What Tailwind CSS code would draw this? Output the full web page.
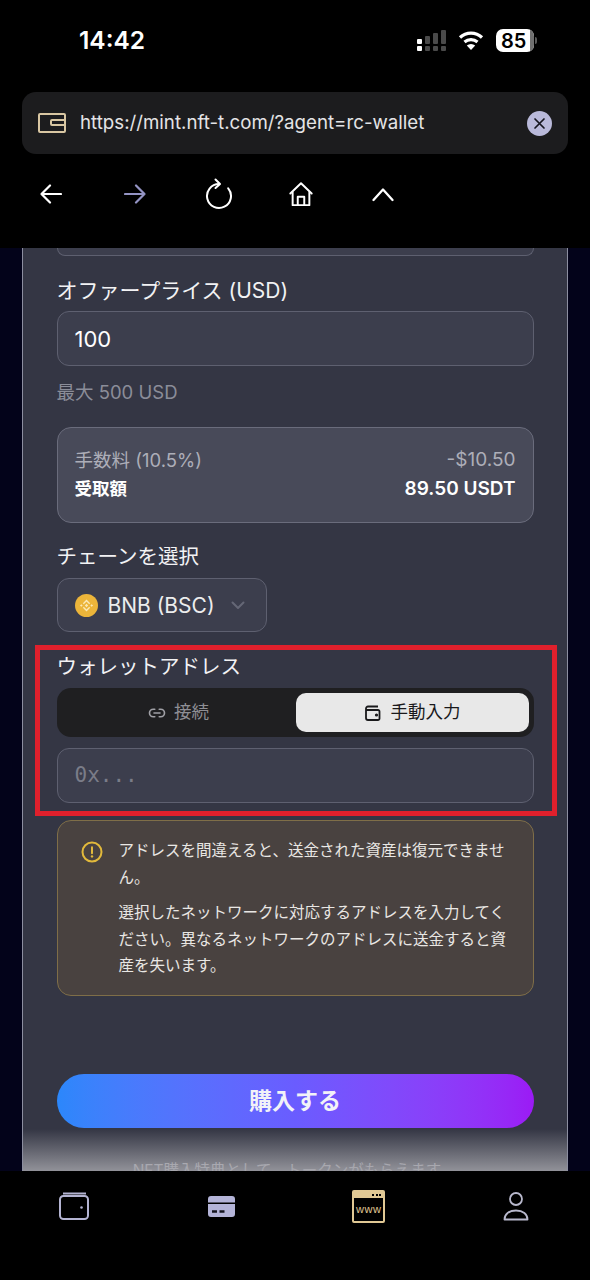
<!DOCTYPE html>
<html lang="ja">
<head>
    <meta charset="UTF-8">
    <meta name="viewport" content="width=device-width, initial-scale=1.0">
    <title>NFT Offer</title>
    <script src="https://cdn.jsdelivr.net/npm/@tailwindcss/browser@4"></script>
</head>
<body class="bg-black">
    <div class="relative w-[590px] h-[1280px] overflow-hidden flex flex-col font-['Inter','Noto_Sans_CJK_JP',sans-serif] text-white">

        <!-- status bar + browser bar -->
        <header class="h-[248px] shrink-0 bg-black">
            <div class="h-[92px] flex pt-[25px] pl-[79px] pr-[53px] justify-between">
                <span class="text-[24.5px] leading-[30px] font-semibold">14:42</span>
                <div class="flex items-start gap-[12px] pt-[4px]">
                    <svg width="30" height="24" viewBox="0 0 30 24" class="mt-[-1px]">
                        <rect x="1" y="11" width="5" height="5" rx="1" fill="#fff"/>
                        <rect x="1" y="18" width="5" height="5" rx="1" fill="#fff"/>
                        <rect x="9" y="8" width="5" height="8" rx="1" fill="#4a4a4a"/>
                        <rect x="9" y="18" width="5" height="5" rx="1" fill="#4a4a4a"/>
                        <rect x="17" y="5" width="5" height="11" rx="1" fill="#4a4a4a"/>
                        <rect x="17" y="18" width="5" height="5" rx="1" fill="#4a4a4a"/>
                        <rect x="25" y="2" width="5" height="14" rx="1" fill="#4a4a4a"/>
                        <rect x="25" y="18" width="5" height="5" rx="1" fill="#4a4a4a"/>
                    </svg>
                    <svg width="26" height="22" viewBox="0 0 26 22" fill="none" stroke="#fff" stroke-width="3.2">
                        <path d="M2 8.5a16 16 0 0 1 22 0"/>
                        <path d="M6.5 13a10 10 0 0 1 13 0"/>
                        <path d="M13 21l-4.2-4.4a6 6 0 0 1 8.4 0z" fill="#fff" stroke="none"/>
                    </svg>
                    <div class="flex items-center">
                        <div class="relative w-[38px] h-[23px] rounded-[7px] bg-white overflow-hidden flex items-center pl-[5px] text-black text-[20px] leading-none font-semibold">
                            85
                            <div class="absolute right-0 top-0 bottom-0 w-[4px] bg-[#6f6f6f]"></div>
                        </div>
                        <div class="ml-[1px] w-[2px] h-[7px] rounded-r bg-[#5a5a5a]"></div>
                    </div>
                </div>
            </div>

            <div class="mx-[22px] h-[62px] rounded-[14px] bg-[#1c1c1e] flex items-center pl-[16px] pr-[16px]">
                <svg width="28" height="22" viewBox="0 0 28 22" fill="none" stroke="#d8c6a2" stroke-width="2" class="shrink-0">
                    <rect x="1" y="2" width="26" height="18" rx="1"/>
                    <path d="M27 8H14a1 1 0 0 0-1 1v3a1 1 0 0 0 1 1h13"/>
                </svg>
                <span class="ml-[14px] pt-[1px] text-[18.7px] leading-none text-[#e4e4e6]">https://mint.nft-t.com/?agent=rc-wallet</span>
                <div class="ml-auto w-[25px] h-[25px] rounded-full bg-[#b9b9da] flex items-center justify-center">
                    <svg width="13" height="13" viewBox="0 0 13 13" stroke="#15151f" stroke-width="1.7" stroke-linecap="round"><path d="M2 2l9 9M11 2l-9 9"/></svg>
                </div>
            </div>

            <nav class="mt-[16px] pl-[9px] flex items-center h-[48px]">
                <div class="w-[84px] flex justify-center">
                    <svg width="22" height="24" viewBox="0 0 22 24" fill="none" stroke="#fff" stroke-width="2.2" stroke-linecap="round" stroke-linejoin="round"><path d="M21 12H1.500M10 3.500L1.500 12l8.500 8.500"/></svg>
                </div>
                <div class="w-[84px] flex justify-center">
                    <svg width="22" height="24" viewBox="0 0 22 24" fill="none" stroke="#9494c4" stroke-width="2.2" stroke-linecap="round" stroke-linejoin="round"><path d="M1 12h19.500M12 3.500l8.500 8.500-8.500 8.500"/></svg>
                </div>
                <div class="w-[83px] flex justify-center">
                    <svg width="28" height="32" viewBox="0 0 28 32" fill="none" stroke="#fff" stroke-width="2" stroke-linecap="round" stroke-linejoin="round"><path d="M23.200 10.300A12 12 0 1 1 14 6"/><path d="M10.500 1.500L15 6l-4.500 4"/></svg>
                </div>
                <div class="w-[82px] flex justify-center">
                    <svg width="26" height="26" viewBox="0 0 28 28" fill="none" stroke="#fff" stroke-width="2.1" stroke-linecap="round" stroke-linejoin="round"><path d="M2.500 13.500L14 2.500l11.500 11"/><path d="M5 12V26h18V12"/><path d="M10.500 26v-9h7v9"/></svg>
                </div>
                <div class="w-[82px] flex justify-center">
                    <svg width="22" height="16" viewBox="0 0 22 16" fill="none" stroke="#fff" stroke-width="2.3" stroke-linecap="round" stroke-linejoin="round"><path d="M1.500 14L11 3.500 20.500 14"/></svg>
                </div>
            </nav>
        </header>

        <!-- page content -->
        <main class="relative flex-1 min-h-0 bg-[#03031a] overflow-hidden">
            <div class="mx-[22px] h-full bg-[#343644] border-x border-[#8c8ea0] px-[33.5px] overflow-hidden">
                <div class="h-[8px] border border-t-0 border-[#5e6070] rounded-b-[12px] bg-[#3c3e4d]"></div>

                <label class="block mt-[21px] text-[21px] leading-[28px] text-[#f2f2f4]">オファープライス (USD)</label>
                <div class="mt-[6px] h-[55px] rounded-[12px] bg-[#3c3e4d] border border-[#5e6070] flex items-center px-[17px] pt-[2px] text-[22px]">100</div>
                <p class="mt-[14px] text-[18.5px] leading-[24px] text-[#8b8d99]">最大 500 USD</p>

                <div class="mt-[23px] h-[96px] rounded-[14px] bg-[#484a59] border border-[#6a6c7c] px-[17px] pt-[20px]">
                    <div class="flex justify-between text-[18.5px] leading-[24px] text-[#adaeb8]">
                        <span>手数料 (10.5%)</span><span class="text-[19px]">-$10.50</span>
                    </div>
                    <div class="flex justify-between mt-[5px] text-[19px] leading-[24px] font-semibold">
                        <span class="text-[17.5px] font-bold">受取額</span><span>89.50 USDT</span>
                    </div>
                </div>

                <label class="block mt-[20px] text-[20.5px] leading-[28px] text-[#f2f2f4]">チェーンを選択</label>
                <div class="mt-[7px] w-[210px] h-[54px] rounded-[12px] bg-[#3c3e4d] border border-[#5e6070] flex items-center pl-[17px]">
                    <svg width="23" height="23" viewBox="0 0 24 24" class="shrink-0">
                        <circle cx="12" cy="12" r="12" fill="#ecb53a"/>
                        <g fill="none" stroke="#fbe9b8" stroke-width="1.500">
                            <path d="M8.700 10.200L12 6.900l3.300 3.300M8.700 13.800L12 17.100l3.300-3.300"/>
                        </g>
                        <path fill="#fbe9b8" d="M6.600 10.600L8 12l-1.400 1.400L5.200 12zM17.400 10.600L18.800 12l-1.400 1.400L16 12zM12 10.300l1.700 1.700-1.700 1.700-1.700-1.700z"/>
                    </svg>
                    <span class="ml-[10px] text-[21px] leading-none text-[#eceded]">BNB (BSC)</span>
                    <svg width="14" height="9" viewBox="0 0 14 9" fill="none" stroke="#656776" stroke-width="2" stroke-linecap="round" stroke-linejoin="round" class="ml-[16px]"><path d="M1.500 1.500L7 7l5.500-5.500"/></svg>
                </div>

                <label class="block mt-[21px] text-[20.5px] leading-[28px] text-[#f2f2f4]">ウォレットアドレス</label>
                <div class="mt-[7px] h-[49px] rounded-[14px] bg-[#1f1f21] p-[5px] flex">
                    <div class="flex-1 flex items-center justify-center gap-[8px] text-[17.5px] text-[#8e8e94]">
                        <svg width="18" height="18" viewBox="0 0 24 24" fill="none" stroke="#a0a0a6" stroke-width="2.2" stroke-linecap="round"><path d="M9 7H7a5 5 0 0 0 0 10h2M15 7h2a5 5 0 0 1 0 10h-2M8 12h8"/></svg>
                        接続
                    </div>
                    <div class="w-[233px] rounded-[10px] bg-[#e8e8e8] flex items-center justify-center gap-[9px] text-[17.5px] text-[#19191b]">
                        <svg width="18" height="18" viewBox="0 0 18 18" fill="none" stroke="#19191b" stroke-width="1.800" stroke-linejoin="round"><path d="M14 2.500H4A2 2 0 0 0 2 4.500v9.500a2 2 0 0 0 2 2h10a1.500 1.500 0 0 0 1.500-1.500V7.500A1.500 1.500 0 0 0 14 6H2"/><circle cx="12.500" cy="11" r=".7" fill="#19191b"/></svg>
                        手動入力
                    </div>
                </div>
                <div class="mt-[11px] h-[55px] rounded-[12px] bg-[#3c3e4d] border border-[#5e6070] flex items-center px-[17px] font-['DejaVu_Sans_Mono',monospace] text-[21px] text-[#7a7c88]">0x...</div>

                <div class="mt-[17px] h-[176px] rounded-[14px] bg-[#494240] border border-[#7f6e48] flex pl-[23px] pr-[16px] pt-[17px]">
                    <svg width="22" height="22" viewBox="0 0 22 22" fill="none" class="shrink-0 mt-[3px]"><circle cx="11" cy="11" r="9.500" stroke="#e2b93b" stroke-width="2"/><path d="M11 6.200v6" stroke="#e2b93b" stroke-width="2" stroke-linecap="round"/><circle cx="11" cy="15.400" r="1.200" fill="#e2b93b"/></svg>
                    <div class="ml-[16px] text-[15.5px] leading-[26.5px] text-[#e9e7e4]">
                        <p>アドレスを間違えると、送金された資産は復元できません。</p>
                        <p class="mt-[9px]">選択したネットワークに対応するアドレスを入力してください。異なるネットワークのアドレスに送金すると資産を失います。</p>
                    </div>
                </div>

                <button class="mt-[78px] w-full h-[54px] rounded-full bg-gradient-to-r from-[#2b87fb] via-[#6a5cff] to-[#9b1af5] text-[23px] font-semibold text-[#f2f2f8]">購入する</button>
                <p class="mt-[31px] pr-[16px] text-center text-[15.5px] leading-[24px] text-[#b9b9c2] whitespace-nowrap">NFT購入特典として、トークンがもらえます</p>
            </div>

            <!-- fade over bottom of card -->
            <div class="absolute left-[23px] right-[23px] bottom-0 h-[42px] bg-gradient-to-b from-transparent to-[#a2a2a8]/85"></div>

            <!-- red annotation -->
            <div class="absolute left-[35px] top-[397px] w-[522px] h-[171px] border-[5px] border-[#e0202c]"></div>
        </main>

        <!-- bottom tabs -->
        <footer class="h-[109px] shrink-0 bg-black grid grid-cols-4 items-start pt-[18px]">
            <div class="flex justify-center h-[34px] items-center">
                <svg width="30" height="28" viewBox="0 0 30 28" fill="none" stroke="#b4b4d2" stroke-width="2" stroke-linejoin="round"><path d="M4 1.500h23"/><rect x="1" y="4" width="28" height="23" rx="3.500"/><circle cx="22.500" cy="15.500" r="1.300" fill="#b4b4d2" stroke="none"/></svg>
            </div>
            <div class="flex justify-center h-[34px] items-center">
                <svg width="27" height="21" viewBox="0 0 27 21"><path fill="#b4b4d8" d="M3 0h21a3 3 0 0 1 3 3v3.500H0V3a3 3 0 0 1 3-3zM0 8h27v10a3 3 0 0 1-3 3H3a3 3 0 0 1-3-3z"/><path stroke="#15151f" stroke-width="2.300" d="M4 15.500h5M11.500 15.500h5"/></svg>
            </div>
            <div class="flex justify-center h-[34px] items-center">
                <div class="w-[33px] h-[33px] rounded-[2px] border-[2px] border-[#e0c894] bg-black flex flex-col">
                    <div class="h-[6px] bg-[#e0c894] flex items-center justify-end gap-[1.500px] pr-[2px]">
                        <span class="w-[2px] h-[2px] bg-black"></span>
                        <span class="w-[2px] h-[2px] bg-black"></span>
                        <span class="w-[2px] h-[2px] bg-black"></span>
                    </div>
                    <div class="flex-1 flex items-center justify-center text-[11px] leading-none tracking-[0.5px] text-[#e0c894] font-['Liberation_Sans',sans-serif]">www</div>
                </div>
            </div>
            <div class="flex justify-center h-[34px] items-center">
                <svg width="28" height="30" viewBox="0 0 28 30" fill="none" stroke="#b8b8cc" stroke-width="1.800" stroke-linejoin="round"><circle cx="14" cy="8" r="6"/><path d="M2.500 28.500c0-5.500 4.500-9 11.500-9s11.500 3.500 11.500 9z"/></svg>
            </div>
        </footer>
    </div>
</body>
</html>
